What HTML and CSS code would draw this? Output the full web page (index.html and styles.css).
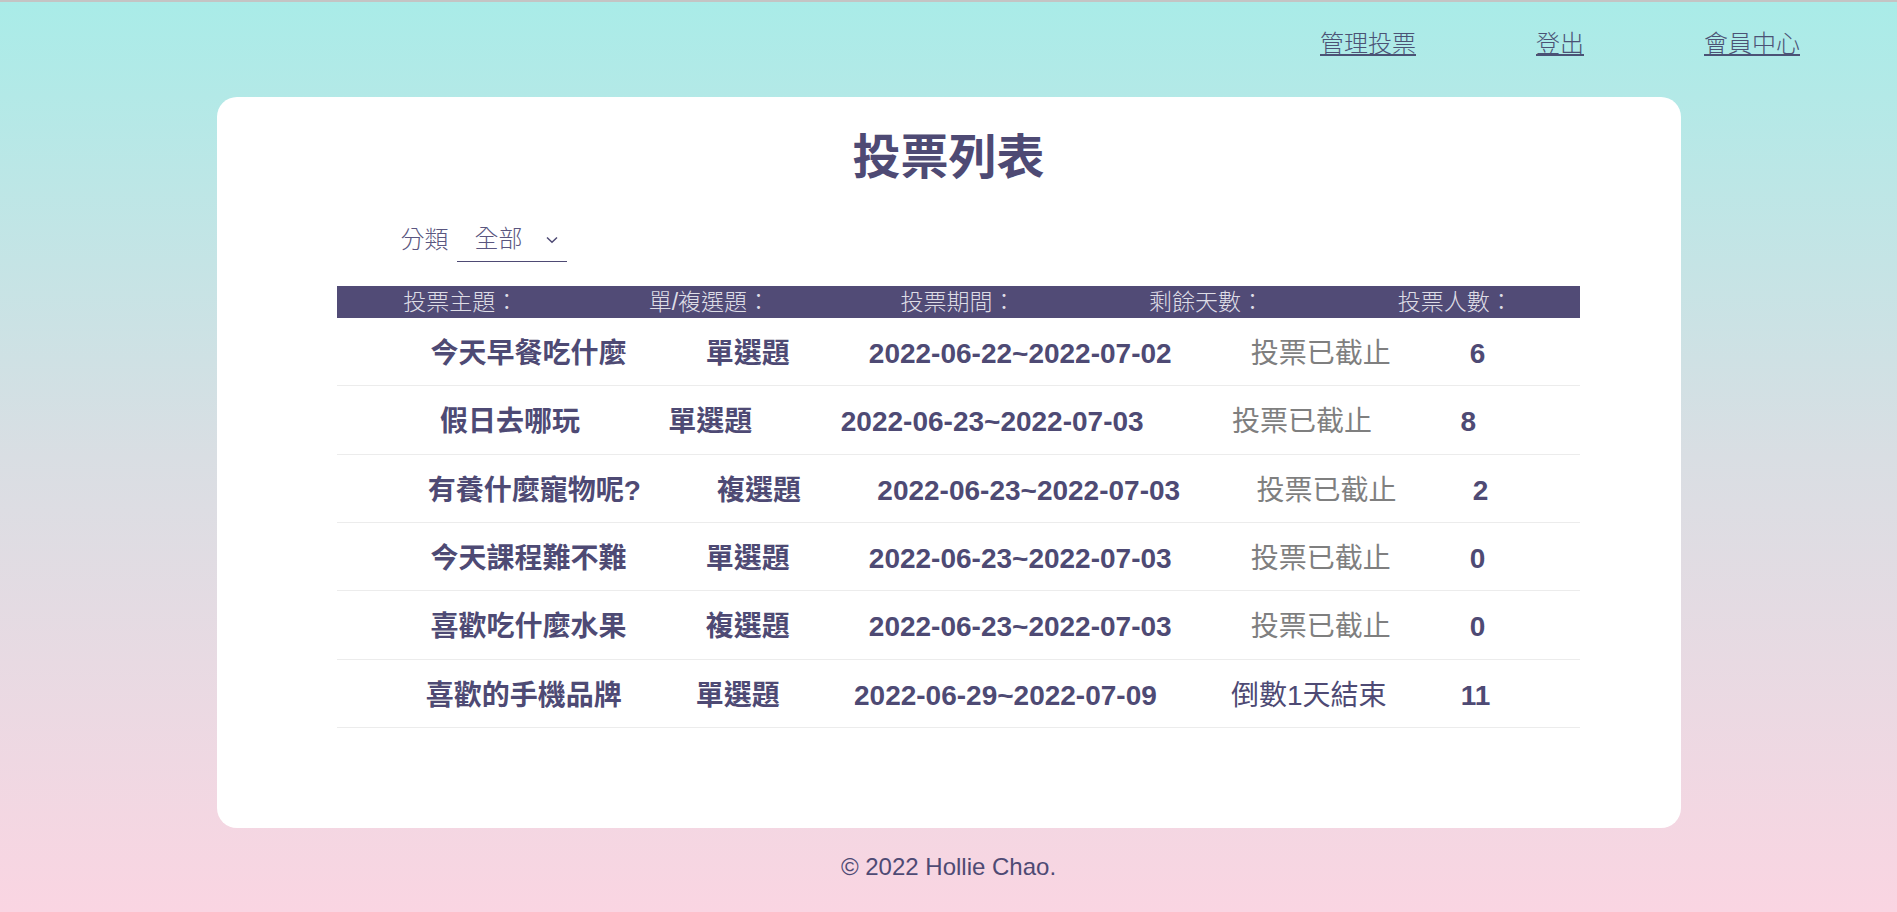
FILE: index.html
```html
<!DOCTYPE html>
<html lang="zh-Hant">
<head>
<meta charset="utf-8">
<title>投票列表</title>
<link rel="stylesheet" href="styles.css">
</head>
<body>
<div class="topline"></div>
<header class="site-header">
  <nav class="nav">
    <a href="#">管理投票</a>
    <a href="#">登出</a>
    <a href="#">會員中心</a>
  </nav>
</header>
<main class="card">
  <h1 class="title">投票列表</h1>
  <div class="filter">
    <span class="filter-label">分類</span>
    <div class="select">
      <span class="select-value">全部</span>
      <svg class="chevron" width="12" height="8" viewBox="0 0 12 8"><path d="M1 1.5 L6 6.2 L11 1.5" fill="none" stroke="#4e4a74" stroke-width="1.5"/></svg>
    </div>
  </div>
  <div class="vote-table">
    <div class="thead">
      <div>投票主題：</div>
      <div>單/複選題：</div>
      <div>投票期間：</div>
      <div>剩餘天數：</div>
      <div>投票人數：</div>
    </div>
    <div class="row">
      <span class="topic">今天早餐吃什麼</span>
      <span class="type">單選題</span>
      <span class="period">2022-06-22~2022-07-02</span>
      <span class="status ended">投票已截止</span>
      <span class="count">6</span>
    </div>
    <div class="row">
      <span class="topic">假日去哪玩</span>
      <span class="type">單選題</span>
      <span class="period">2022-06-23~2022-07-03</span>
      <span class="status ended">投票已截止</span>
      <span class="count">8</span>
    </div>
    <div class="row">
      <span class="topic">有養什麼寵物呢?</span>
      <span class="type">複選題</span>
      <span class="period">2022-06-23~2022-07-03</span>
      <span class="status ended">投票已截止</span>
      <span class="count">2</span>
    </div>
    <div class="row">
      <span class="topic">今天課程難不難</span>
      <span class="type">單選題</span>
      <span class="period">2022-06-23~2022-07-03</span>
      <span class="status ended">投票已截止</span>
      <span class="count">0</span>
    </div>
    <div class="row">
      <span class="topic">喜歡吃什麼水果</span>
      <span class="type">複選題</span>
      <span class="period">2022-06-23~2022-07-03</span>
      <span class="status ended">投票已截止</span>
      <span class="count">0</span>
    </div>
    <div class="row">
      <span class="topic">喜歡的手機品牌</span>
      <span class="type">單選題</span>
      <span class="period">2022-06-29~2022-07-09</span>
      <span class="status active">倒數1天結束</span>
      <span class="count">11</span>
    </div>
  </div>
</main>
<footer class="footer">© 2022 Hollie Chao.</footer>
</body>
</html>
```

FILE: styles.css
```css
html, body {
  margin: 0;
  padding: 0;
}

html {
  height: 100%;
}

body {
  min-height: 100%;
  background: linear-gradient(180deg, #a9ece8 0%, #d9dee3 50%, #fad5e2 100%);
  font-family: "Liberation Sans", "Noto Sans CJK TC", sans-serif;
  color: #4e4a74;
}

.topline {
  height: 2px;
  background: #c4c4c4;
}

.site-header {
  height: 95px;
  box-sizing: border-box;
  padding-top: 26px;
}

.nav {
  display: flex;
  justify-content: flex-end;
  gap: 120px;
  padding-right: 97px;
}

.nav a {
  font-size: 24px;
  line-height: 32px;
  font-weight: 300;
  color: #4b5275;
  text-decoration: underline;
}

.card {
  width: 1464px;
  height: 731px;
  margin: 0 auto;
  box-sizing: border-box;
  padding-top: 31px;
  background: #ffffff;
  border-radius: 20px;
}

.title {
  margin: 0;
  font-size: 48px;
  line-height: 60px;
  font-weight: 700;
  text-align: center;
  color: #4e4a74;
}

.filter {
  display: flex;
  align-items: flex-end;
  gap: 8px;
  margin: 35px 0 0 184px;
  font-size: 24px;
  line-height: 32px;
  font-weight: 300;
  color: #5a5680;
}

.filter-label {
  padding-bottom: 6px;
}

.select {
  display: flex;
  align-items: center;
  gap: 23px;
  width: 110px;
  box-sizing: border-box;
  padding: 0 7px 6px 18px;
  border-bottom: 1px solid #4e4a74;
}

.chevron {
  display: block;
  margin-top: 1px;
}

.vote-table {
  width: 1243px;
  margin: 24px 0 0 120px;
}

.thead {
  display: grid;
  grid-template-columns: repeat(5, 1fr);
  height: 32px;
  background: #514b76;
  color: #dedde6;
  font-size: 23px;
  line-height: 32px;
  font-weight: 300;
  text-align: center;
}

.row {
  display: flex;
  justify-content: space-evenly;
  align-items: baseline;
  height: 68.33px;
  box-sizing: border-box;
  padding: 16px 15px 0;
  border-bottom: 1px solid #ececec;
  font-size: 28px;
  line-height: 40px;
}

.topic,
.type,
.period,
.count {
  font-weight: 700;
  color: #4e4a74;
}

.status {
  font-weight: 400;
}

.status.ended {
  color: #7f7f7f;
}

.status.active {
  color: #4e4a74;
}

.footer {
  margin-top: 23px;
  padding-bottom: 37px;
  font-size: 24px;
  line-height: 32px;
  text-align: center;
  color: #4e4a74;
}
```
